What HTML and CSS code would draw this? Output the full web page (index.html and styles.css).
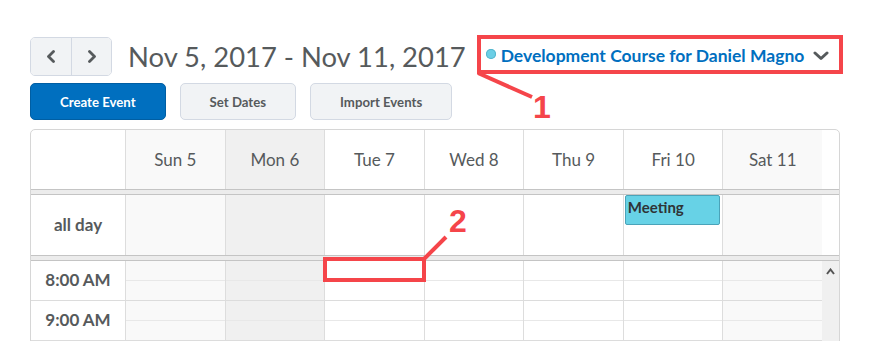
FILE: index.html
```html
<!DOCTYPE html>
<html>
	<head>
		<meta charset="utf-8">
		<title>Calendar</title>
		<meta name="viewport" content="width=device-width, initial-scale=1.0">
		<link rel="stylesheet" href="styles.css">
	</head>
	<body>
		<div class="toolbar">
			<div class="pager">
				<button class="pager-btn" aria-label="Previous week">
					<svg width="10" height="13" viewBox="0 0 10 13"><path d="M7.5 1.5 L2.5 6.5 L7.5 11.5" fill="none" stroke="#565a5c" stroke-width="2.8" stroke-linejoin="round" stroke-linecap="round"/></svg>
				</button>
				<button class="pager-btn" aria-label="Next week">
					<svg width="10" height="13" viewBox="0 0 10 13"><path d="M2.5 1.5 L7.5 6.5 L2.5 11.5" fill="none" stroke="#565a5c" stroke-width="2.8" stroke-linejoin="round" stroke-linecap="round"/></svg>
				</button>
			</div>
			<h1 class="range">Nov 5, 2017 - Nov 11, 2017</h1>
			<div class="course">
				<span class="course-dot"></span>
				<span class="course-name">Development Course for Daniel Magno</span>
				<svg class="course-caret" width="16" height="10" viewBox="0 0 16 10"><path d="M2 2 L8 7.5 L14 2" fill="none" stroke="#565a5c" stroke-width="3" stroke-linejoin="round" stroke-linecap="round"/></svg>
			</div>
		</div>

		<div class="actions">
			<button class="btn btn-primary">Create Event</button>
			<button class="btn">Set Dates</button>
			<button class="btn">Import Events</button>
		</div>

		<div class="cal">
			<div class="cal-head">
				<div class="corner"></div>
				<div class="day weekend">Sun 5</div>
				<div class="day today">Mon 6</div>
				<div class="day">Tue 7</div>
				<div class="day">Wed 8</div>
				<div class="day">Thu 9</div>
				<div class="day">Fri 10</div>
				<div class="day weekend">Sat 11</div>
				<div class="gutter"></div>
			</div>
			<div class="cal-sep"></div>
			<div class="cal-allday">
				<div class="label">all day</div>
				<div class="day weekend"></div>
				<div class="day today"></div>
				<div class="day"></div>
				<div class="day"></div>
				<div class="day"></div>
				<div class="day"><div class="event">Meeting</div></div>
				<div class="day weekend"></div>
				<div class="gutter"></div>
			</div>
			<div class="cal-sep"></div>
			<div class="cal-body">
				<div class="hours">
					<div class="hour">
						<div class="label">8:00 AM</div>
						<div class="slot weekend"><div class="half"></div></div>
						<div class="slot today"><div class="half"></div></div>
						<div class="slot"><div class="half"></div></div>
						<div class="slot"><div class="half"></div></div>
						<div class="slot"><div class="half"></div></div>
						<div class="slot"><div class="half"></div></div>
						<div class="slot weekend"><div class="half"></div></div>
					</div>
					<div class="hour">
						<div class="label">9:00 AM</div>
						<div class="slot weekend"><div class="half"></div></div>
						<div class="slot today"><div class="half"></div></div>
						<div class="slot"><div class="half"></div></div>
						<div class="slot"><div class="half"></div></div>
						<div class="slot"><div class="half"></div></div>
						<div class="slot"><div class="half"></div></div>
						<div class="slot weekend"><div class="half"></div></div>
					</div>
				</div>
				<div class="scroll">
					<svg width="9" height="7" viewBox="0 0 9 7"><path d="M1 6 L4.5 1.5 L8 6" fill="none" stroke="#555" stroke-width="2"/></svg>
				</div>
			</div>
		</div>

		<!-- annotations -->
		<svg class="marks" width="870" height="341" viewBox="0 0 870 341">
			<line x1="478" y1="73" x2="532" y2="97" stroke="#f5454a" stroke-width="4"/>
			<line x1="424" y1="259" x2="446" y2="237" stroke="#f5454a" stroke-width="4"/>
		</svg>
		<div class="mark-box mark-box-1"></div>
		<div class="mark-box mark-box-2"></div>
		<div class="mark-num mark-num-1">1</div>
		<div class="mark-num mark-num-2">2</div>
	</body>
</html>
```

FILE: styles.css
```css
html {
	height: 100%;
}

body {
	position: relative;
	margin: 0;
	padding: 37px 0 0 30px;
	height: 100%;
	box-sizing: border-box;
	overflow: hidden;
	background-color: #ffffff;
	font-family: Lato, "Open Sans", sans-serif;
	color: #565a5c;
}

.toolbar {
	display: flex;
	align-items: center;
	height: 39px;
}

.pager {
	display: flex;
	height: 39px;
	border: 1px solid #d3d9e3;
	border-radius: 5px;
	box-sizing: border-box;
	overflow: hidden;
}

.pager-btn {
	display: flex;
	align-items: center;
	justify-content: center;
	width: 40px;
	padding: 0;
	border: none;
	background-color: #f1f3f5;
}

.pager-btn + .pager-btn {
	border-left: 1px solid #d3d9e3;
}

.range {
	margin: 0 0 0 16px;
	font-size: 27.4px;
	font-weight: normal;
	line-height: 39px;
	color: #565a5c;
}

.course {
	display: flex;
	align-items: center;
	margin-left: 20px;
	margin-top: -2px;
}

.course-dot {
	width: 10px;
	height: 10px;
	border-radius: 50%;
	background-color: #6ccfe6;
	box-shadow: inset 0 0 0 1px #55b6cc;
	margin-right: 5px;
	margin-top: -3px;
}

.course-name {
	font-size: 17.5px;
	font-weight: bold;
	color: #006fbf;
}

.course-caret {
	margin-left: 9px;
}

.actions {
	display: flex;
	gap: 14px;
	margin-top: 7px;
}

.btn {
	height: 37px;
	padding: 0 29px;
	font-family: Lato, "Open Sans", sans-serif;
	font-size: 13.2px;
	font-weight: bold;
	color: #565a5c;
	background-color: #f1f3f5;
	border: 1px solid #d3d9e3;
	border-radius: 5px;
}

.btn-primary {
	color: #ffffff;
	background-color: #006fbf;
	border-color: #005ea3;
}

.cal {
	width: 810px;
	margin-top: 9px;
	border: 1px solid #d6d6d6;
	border-radius: 5px 5px 0 0;
	box-sizing: border-box;
}

.cal-head,
.cal-allday {
	display: grid;
	grid-template-columns: 94px repeat(7, 1fr) 17px;
}

.cal-head {
	height: 59px;
}

.cal-allday {
	height: 60px;
}

.cal-head .day {
	display: flex;
	align-items: center;
	justify-content: center;
	font-size: 17px;
}

.day,
.slot {
	border-left: 1px solid #dddddd;
	background-color: #ffffff;
}

.weekend {
	background-color: #f9f9f9;
}

.today {
	background-color: #f0f0f0;
}

.cal-sep {
	height: 4px;
	border-top: 1px solid #c4c4c4;
	border-bottom: 1px solid #c4c4c4;
	background-color: #ececec;
}

.label {
	display: flex;
	align-items: center;
	justify-content: center;
	padding-bottom: 2px;
	font-size: 17px;
	font-weight: bold;
}

.cal-allday .day {
	padding: 0 2px 0 1px;
}

.event {
	height: 30px;
	padding: 2px 0 0 2px;
	box-sizing: border-box;
	font-size: 15px;
	font-weight: bold;
	color: #2f3436;
	background-color: #67d2e6;
	border: 1px solid #4aa3b9;
	border-radius: 2px;
}

.cal-body {
	display: flex;
}

.hours {
	flex: 1;
}

.hour {
	display: grid;
	grid-template-columns: 94px repeat(7, 1fr);
	height: 40px;
	border-bottom: 1px solid #dcdcdc;
	box-sizing: border-box;
}

.half {
	height: 20px;
	border-bottom: 1px solid #e8e8e8;
	box-sizing: border-box;
}

.scroll {
	display: flex;
	justify-content: center;
	width: 17px;
	padding-top: 7px;
	box-sizing: border-box;
	background-color: #f0f0f0;
}

.marks {
	position: absolute;
	left: 0;
	top: 0;
	pointer-events: none;
}

.mark-box {
	position: absolute;
	border: 4px solid #f5454a;
	box-sizing: border-box;
}

.mark-box-1 {
	left: 477px;
	top: 35px;
	width: 366px;
	height: 39px;
}

.mark-box-2 {
	left: 323px;
	top: 257px;
	width: 103px;
	height: 25px;
}

.mark-num {
	position: absolute;
	font-family: "Liberation Sans", Arial, sans-serif;
	font-size: 32px;
	font-weight: bold;
	line-height: 1;
	color: #f5454a;
}

.mark-num-1 {
	left: 533px;
	top: 91px;
}

.mark-num-2 {
	left: 449px;
	top: 205px;
}
```
